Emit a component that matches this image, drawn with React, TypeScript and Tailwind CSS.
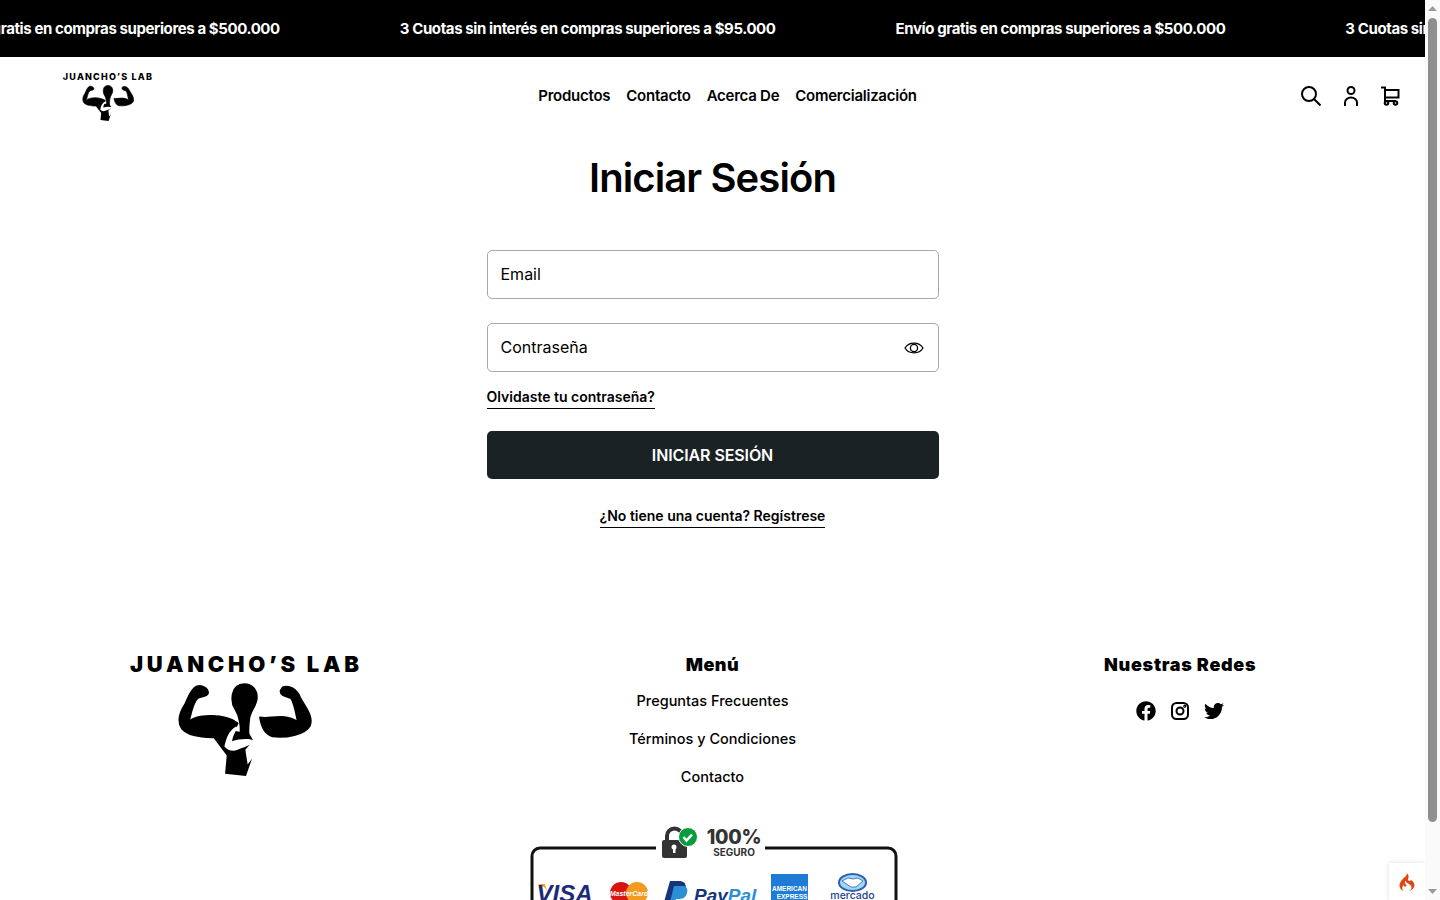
import { FaFacebook, FaTwitter } from 'react-icons/fa';
import { SiCodeigniter } from 'react-icons/si';

const promos = [
  'Envío gratis en compras superiores a $500.000',
  '3 Cuotas sin interés en compras superiores a $95.000',
  'Envío gratis en compras superiores a $500.000',
  '3 Cuotas sin interés en compras superiores a $95.000',
];

const navLinks = ['Productos', 'Contacto', 'Acerca De', 'Comercialización'];
const footerLinks = ['Preguntas Frecuentes', 'Términos y Condiciones', 'Contacto'];

const LogoMark = ({ className }: { className: string }) => (
  <svg viewBox="203 127 405 280" className={className} fill="#000">
    <g stroke="#000" strokeWidth="5" strokeLinejoin="round">
      <path d="M262 137C280 132 296 145 296 157C293 168 280 165 265 172C250 185 245 215 238 245C255 222 345 216 385 248C378 270 360 265 345 288C310 293 240 293 217 265C204 245 207 220 227 190C237 170 242 147 262 137Z" />
      <path d="M520 140C540 132 563 145 573 170C588 200 613 225 603 255C588 283 530 293 490 288C472 283 457 265 452 230C475 238 530 215 566 245C560 215 555 185 545 172C530 168 512 165 514 150Z" />
      <path d="M405 130C428 130 443 148 443 170C443 195 423 210 420 235C418 250 416 265 418 285L392 285C397 260 390 225 377 205C364 185 362 130 405 130Z" />
    </g>
    <path d="M312 292L360 268L420 280L432 300L408 328L415 372L428 355L410 407L347 400L352 345Z" />
    <path d="M345 318C350 295 358 270 380 258L385 265C375 275 370 290 368 302C390 296 420 292 438 302C425 315 395 322 385 328C370 335 355 330 345 318Z" fill="#fff" />
  </svg>
);

const PaymentBadge = () => (
  <svg viewBox="528 825 370 75" className="mx-auto mt-[38px] block h-[75px] w-[370px]">
    <path d="M656 848H540a8 8 0 0 0-8 8V900M765 848H888a8 8 0 0 1 8 8V900" fill="none" stroke="#111" strokeWidth="3" />
    {/* candado */}
    <path d="M667 842V836a7.500 7.500 0 0 1 15 0V842" fill="none" stroke="#333" strokeWidth="4" />
    <rect x="662" y="840" width="25" height="18" rx="2" fill="#333" />
    <circle cx="674" cy="847" r="2.500" fill="#fff" />
    <rect x="673" y="847" width="2.500" height="6" fill="#fff" />
    <circle cx="688" cy="837" r="9.500" fill="#0a9b3c" stroke="#fff" strokeWidth="1" />
    <path d="M683.500 837l3 3.500 5.500-6" fill="none" stroke="#fff" strokeWidth="2.500" />
    <text x="734" y="844" textAnchor="middle" fontFamily="Inter, sans-serif" fontWeight="800" fontSize="19.500" letterSpacing="-0.3" fill="#333">100%</text>
    <text x="734" y="856" textAnchor="middle" fontFamily="Inter, sans-serif" fontWeight="700" fontSize="10" fill="#333">SEGURO</text>
    {/* visa */}
    <path d="M537 884c5 1 8 3 10 7l-2-7z" fill="#f4a51c" />
    <text x="564.500" y="902" textAnchor="middle" fontFamily="Liberation Sans, sans-serif" fontWeight="700" fontStyle="italic" fontSize="24" fill="#1b2a7a">VISA</text>
    {/* mastercard */}
    <circle cx="621" cy="893" r="11" fill="#d8140f" />
    <circle cx="637" cy="893" r="11" fill="#f49a1f" />
    <text x="629" y="896" textAnchor="middle" fontFamily="Liberation Sans, sans-serif" fontWeight="700" fontStyle="italic" fontSize="7" fill="#fff">MasterCard</text>
    {/* paypal */}
    <path d="M670 881h9c6 0 8 4 6 9-1 5-5 7-10 7h-3l-2 5h-6z" fill="#15347c" />
    <path d="M674 886h8c5 0 6 3 5 7-1 5-5 6-9 6h-2l-1 3h-5z" fill="#2b8fd6" />
    <text x="694" y="902" fontFamily="Liberation Sans, sans-serif" fontWeight="700" fontStyle="italic" fontSize="19">
      <tspan fill="#15347c">Pay</tspan>
      <tspan fill="#2b8fd6">Pal</tspan>
    </text>
    {/* amex */}
    <rect x="771" y="874" width="37" height="26" fill="#1e7cd6" />
    <text x="789.500" y="891" textAnchor="middle" fontFamily="Liberation Sans, sans-serif" fontWeight="700" fontSize="6.500" fill="#fff">AMERICAN</text>
    <text x="792" y="899" textAnchor="middle" fontFamily="Liberation Sans, sans-serif" fontWeight="700" fontSize="6.500" fill="#fff">EXPRESS</text>
    {/* mercado */}
    <ellipse cx="852.500" cy="882.500" rx="14.500" ry="9.500" fill="#2d5fb3" />
    <ellipse cx="852.500" cy="882.500" rx="12.500" ry="7.500" fill="#9fd6f2" />
    <path d="M842 881l6-3 5 1 5-1 5 3-7 6h-5z" fill="#fff" stroke="#2d5fb3" strokeWidth="0.800" />
    <text x="852.500" y="899" textAnchor="middle" fontFamily="Inter, sans-serif" fontWeight="500" fontSize="10.500" fill="#1e3f8f">mercado</text>
  </svg>
);

const Scrollbar = () => (
  <aside className="flex h-screen w-[15px] shrink-0 flex-col items-center bg-[#fafafa]">
    <svg viewBox="0 0 9 5" className="mt-[6px] h-[5px] w-[9px] fill-[#9a9a9a]">
      <path d="M4.500 0L9 5H0z" />
    </svg>
    <div className="mt-[7px] h-[804px] w-[9px] rounded-[5px] bg-[#8f8f8f]" />
    <svg viewBox="0 0 9 5" className="mt-auto mb-[6px] h-[5px] w-[9px] fill-[#9a9a9a]">
      <path d="M0 0H9L4.500 5z" />
    </svg>
  </aside>
);

const App = () => {
  return (
    <div className="flex h-screen overflow-hidden bg-white font-['Inter',sans-serif] text-black">
      <main className="relative w-[1425px] shrink-0 overflow-hidden">
        <div className="flex h-[57px] items-center overflow-hidden whitespace-nowrap bg-black pt-[2px] text-[15px] font-bold tracking-[-0.4px] text-white">
          <div className="-ml-[50px] flex gap-[120px]">
            {promos.map((promo, i) => (
              <span key={i}>{promo}</span>
            ))}
          </div>
        </div>

        <header className="flex h-[78px] items-center justify-between pl-[63px] pr-[25px]">
          <div className="flex w-[90px] flex-col items-center">
            <span className="whitespace-nowrap text-[9px] font-extrabold leading-[10px] tracking-[1.2px]">JUANCHO’S LAB</span>
            <LogoMark className="mt-[3px] h-[36px] w-[52px]" />
          </div>
          <nav className="ml-[1px] flex gap-4 text-[15px] font-semibold tracking-[-0.25px]">
            {navLinks.map((link) => (
              <a key={link}>{link}</a>
            ))}
          </nav>
          <div className="flex items-center gap-[18.5px]">
            <svg viewBox="0 0 20 20" className="mr-[2px] size-[20px]" fill="none" stroke="#000" strokeWidth="2">
              <circle cx="8" cy="8" r="7" />
              <path d="M13 13l6.500 6.500" />
            </svg>
            <svg viewBox="0 0 20 20" className="size-[20px]" fill="none" stroke="#000" strokeWidth="2">
              <circle cx="10" cy="4.500" r="3.500" />
              <path d="M4 20v-3.500a6 5 0 0 1 12 0V20" />
            </svg>
            <svg viewBox="0 0 20 20" className="size-[20px]" fill="none" stroke="#000" strokeWidth="2">
              <path d="M1 1.500h4V15h11M5 4h13.500v7.500H5" />
              <circle cx="6.500" cy="17" r="1.800" />
              <circle cx="15.500" cy="17" r="1.800" />
            </svg>
          </div>
        </header>

        <section className="flex flex-col items-center">
          <h1 className="mt-[19px] text-[40px] font-semibold leading-[48px] tracking-[-0.9px]">Iniciar Sesión</h1>
          <form className="mt-[48px] flex w-[452px] flex-col">
            <input
              placeholder="Email"
              className="h-[49px] rounded-[5px] border border-[#a8a8a8] px-[13px] pb-[2px] text-base placeholder:text-black"
            />
            <div className="relative mt-[24px]">
              <input
                placeholder="Contraseña"
                className="h-[49px] w-full rounded-[5px] border border-[#a8a8a8] px-[13px] pb-[2px] text-base placeholder:text-black"
              />
              <svg viewBox="0 0 20 14" className="absolute right-[15px] top-[18px] h-[14px] w-[20px]" fill="none" stroke="#000" strokeWidth="1.3">
                <path d="M1 7C5 .5 15 .5 19 7C15 13.500 5 13.500 1 7Z" />
                <circle cx="10" cy="7" r="3.600" />
              </svg>
            </div>
            <a className="mt-[15px] self-start border-b border-black pb-[2px] text-sm font-semibold leading-[19px]">
              Olvidaste tu contraseña?
            </a>
            <button
              type="button"
              className="mt-[22px] h-[48px] rounded-[5px] bg-[#1a2224] text-base font-semibold tracking-[-0.1px] text-white"
            >
              INICIAR SESIÓN
            </button>
            <a className="mt-[27px] self-center border-b border-black pb-[2px] text-sm font-semibold leading-[19px]">
              ¿No tiene una cuenta? Regístrese
            </a>
          </form>
        </section>

        <footer className="mt-[124px] px-[11px]">
          <div className="grid grid-cols-3">
            <div className="flex flex-col items-center pt-[1px]">
              <span className="whitespace-nowrap pl-[3px] text-[22px] font-black leading-[22px] tracking-[3.7px]">JUANCHO’S LAB</span>
              <LogoMark className="mt-[8px] h-[93px] w-[135px]" />
            </div>
            <div className="flex flex-col items-center pt-[1px]">
              <h4 className="text-lg font-black leading-6 tracking-[0.5px]">Menú</h4>
              <ul className="mt-[14px] flex flex-col items-center gap-[18px] text-[14.5px] font-medium leading-5">
                {footerLinks.map((link) => (
                  <li key={link}>{link}</li>
                ))}
              </ul>
            </div>
            <div className="flex flex-col items-center pt-[1px]">
              <h4 className="text-lg font-black leading-6 tracking-[0.7px]">Nuestras Redes</h4>
              <div className="mt-[24px] flex items-center gap-[14px]">
                <FaFacebook size={20} />
                <svg viewBox="0 0 20 20" className="size-[20px]" fill="none" stroke="#000" strokeWidth="2">
                  <rect x="2" y="2" width="16" height="16" rx="4.500" />
                  <circle cx="10" cy="10" r="3.500" />
                  <circle cx="14.800" cy="5.200" r="0.600" />
                </svg>
                <FaTwitter size={20} />
              </div>
            </div>
          </div>
          <PaymentBadge />
        </footer>

        <div className="absolute bottom-0 right-0 flex h-[37px] w-[36px] items-center justify-center bg-white shadow-[0_0_4px_rgba(0,0,0,0.15)]">
          <SiCodeigniter size={18} className="text-[#dd4814]" />
        </div>
      </main>
      <Scrollbar />
    </div>
  );
};

export default App;
